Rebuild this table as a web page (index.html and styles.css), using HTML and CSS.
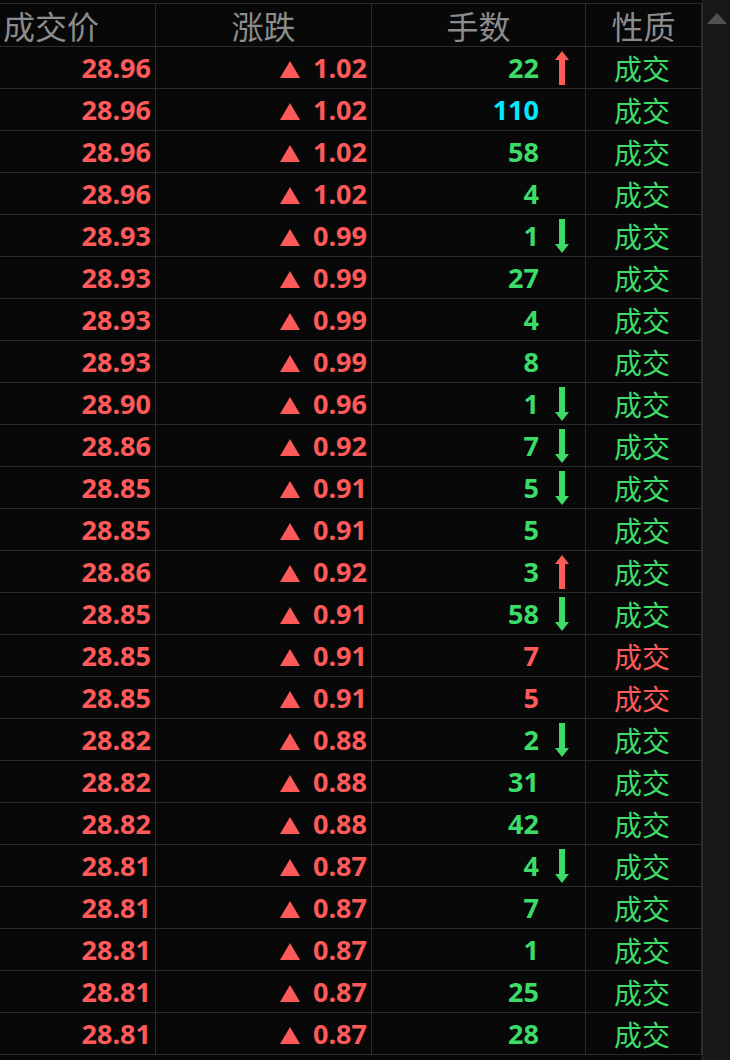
FILE: index.html
```html
<!DOCTYPE html>
<html lang="zh-CN">
<head>
    <meta charset="UTF-8">
    <meta name="viewport" content="width=device-width, initial-scale=1.0">
    <title>成交明细</title>
    <link rel="stylesheet" href="styles.css">
</head>
<body>
    <svg class="defs" width="0" height="0">
        <symbol id="tri" viewBox="0 0 20 17"><path d="M10 0 L20 17 L0 17 Z"/></symbol>
        <symbol id="up" viewBox="0 0 14 34"><path d="M7 0 L14 9 L10 9 L10 34 L4 34 L4 9 L0 9 Z"/></symbol>
        <symbol id="down" viewBox="0 0 14 34"><path d="M4 0 L10 0 L10 25 L14 25 L7 34 L0 25 L4 25 Z"/></symbol>
    </svg>

    <div class="wrap">
        <div class="ticks">
            <div class="row head">
                <div class="cell price">成交价</div>
                <div class="cell">涨跌</div>
                <div class="cell">手数</div>
                <div class="cell">性质</div>
            </div>

            <div class="row"><div class="cell price">28.96</div><div class="cell chg"><svg class="tri"><use href="#tri" width="20" height="17"/></svg>1.02</div><div class="cell vol"><span class="num">22</span><span class="dir"><svg class="arrow red"><use href="#up" width="14" height="34"/></svg></span></div><div class="cell kind">成交</div></div>
            <div class="row"><div class="cell price">28.96</div><div class="cell chg"><svg class="tri"><use href="#tri" width="20" height="17"/></svg>1.02</div><div class="cell vol"><span class="num big">110</span><span class="dir"></span></div><div class="cell kind">成交</div></div>
            <div class="row"><div class="cell price">28.96</div><div class="cell chg"><svg class="tri"><use href="#tri" width="20" height="17"/></svg>1.02</div><div class="cell vol"><span class="num">58</span><span class="dir"></span></div><div class="cell kind">成交</div></div>
            <div class="row"><div class="cell price">28.96</div><div class="cell chg"><svg class="tri"><use href="#tri" width="20" height="17"/></svg>1.02</div><div class="cell vol"><span class="num">4</span><span class="dir"></span></div><div class="cell kind">成交</div></div>
            <div class="row"><div class="cell price">28.93</div><div class="cell chg"><svg class="tri"><use href="#tri" width="20" height="17"/></svg>0.99</div><div class="cell vol"><span class="num">1</span><span class="dir"><svg class="arrow green"><use href="#down" width="14" height="34"/></svg></span></div><div class="cell kind">成交</div></div>
            <div class="row"><div class="cell price">28.93</div><div class="cell chg"><svg class="tri"><use href="#tri" width="20" height="17"/></svg>0.99</div><div class="cell vol"><span class="num">27</span><span class="dir"></span></div><div class="cell kind">成交</div></div>
            <div class="row"><div class="cell price">28.93</div><div class="cell chg"><svg class="tri"><use href="#tri" width="20" height="17"/></svg>0.99</div><div class="cell vol"><span class="num">4</span><span class="dir"></span></div><div class="cell kind">成交</div></div>
            <div class="row"><div class="cell price">28.93</div><div class="cell chg"><svg class="tri"><use href="#tri" width="20" height="17"/></svg>0.99</div><div class="cell vol"><span class="num">8</span><span class="dir"></span></div><div class="cell kind">成交</div></div>
            <div class="row"><div class="cell price">28.90</div><div class="cell chg"><svg class="tri"><use href="#tri" width="20" height="17"/></svg>0.96</div><div class="cell vol"><span class="num">1</span><span class="dir"><svg class="arrow green"><use href="#down" width="14" height="34"/></svg></span></div><div class="cell kind">成交</div></div>
            <div class="row"><div class="cell price">28.86</div><div class="cell chg"><svg class="tri"><use href="#tri" width="20" height="17"/></svg>0.92</div><div class="cell vol"><span class="num">7</span><span class="dir"><svg class="arrow green"><use href="#down" width="14" height="34"/></svg></span></div><div class="cell kind">成交</div></div>
            <div class="row"><div class="cell price">28.85</div><div class="cell chg"><svg class="tri"><use href="#tri" width="20" height="17"/></svg>0.91</div><div class="cell vol"><span class="num">5</span><span class="dir"><svg class="arrow green"><use href="#down" width="14" height="34"/></svg></span></div><div class="cell kind">成交</div></div>
            <div class="row"><div class="cell price">28.85</div><div class="cell chg"><svg class="tri"><use href="#tri" width="20" height="17"/></svg>0.91</div><div class="cell vol"><span class="num">5</span><span class="dir"></span></div><div class="cell kind">成交</div></div>
            <div class="row"><div class="cell price">28.86</div><div class="cell chg"><svg class="tri"><use href="#tri" width="20" height="17"/></svg>0.92</div><div class="cell vol"><span class="num">3</span><span class="dir"><svg class="arrow red"><use href="#up" width="14" height="34"/></svg></span></div><div class="cell kind">成交</div></div>
            <div class="row"><div class="cell price">28.85</div><div class="cell chg"><svg class="tri"><use href="#tri" width="20" height="17"/></svg>0.91</div><div class="cell vol"><span class="num">58</span><span class="dir"><svg class="arrow green"><use href="#down" width="14" height="34"/></svg></span></div><div class="cell kind">成交</div></div>
            <div class="row"><div class="cell price">28.85</div><div class="cell chg"><svg class="tri"><use href="#tri" width="20" height="17"/></svg>0.91</div><div class="cell vol"><span class="num buy">7</span><span class="dir"></span></div><div class="cell kind buy">成交</div></div>
            <div class="row"><div class="cell price">28.85</div><div class="cell chg"><svg class="tri"><use href="#tri" width="20" height="17"/></svg>0.91</div><div class="cell vol"><span class="num buy">5</span><span class="dir"></span></div><div class="cell kind buy">成交</div></div>
            <div class="row"><div class="cell price">28.82</div><div class="cell chg"><svg class="tri"><use href="#tri" width="20" height="17"/></svg>0.88</div><div class="cell vol"><span class="num">2</span><span class="dir"><svg class="arrow green"><use href="#down" width="14" height="34"/></svg></span></div><div class="cell kind">成交</div></div>
            <div class="row"><div class="cell price">28.82</div><div class="cell chg"><svg class="tri"><use href="#tri" width="20" height="17"/></svg>0.88</div><div class="cell vol"><span class="num">31</span><span class="dir"></span></div><div class="cell kind">成交</div></div>
            <div class="row"><div class="cell price">28.82</div><div class="cell chg"><svg class="tri"><use href="#tri" width="20" height="17"/></svg>0.88</div><div class="cell vol"><span class="num">42</span><span class="dir"></span></div><div class="cell kind">成交</div></div>
            <div class="row"><div class="cell price">28.81</div><div class="cell chg"><svg class="tri"><use href="#tri" width="20" height="17"/></svg>0.87</div><div class="cell vol"><span class="num">4</span><span class="dir"><svg class="arrow green"><use href="#down" width="14" height="34"/></svg></span></div><div class="cell kind">成交</div></div>
            <div class="row"><div class="cell price">28.81</div><div class="cell chg"><svg class="tri"><use href="#tri" width="20" height="17"/></svg>0.87</div><div class="cell vol"><span class="num">7</span><span class="dir"></span></div><div class="cell kind">成交</div></div>
            <div class="row"><div class="cell price">28.81</div><div class="cell chg"><svg class="tri"><use href="#tri" width="20" height="17"/></svg>0.87</div><div class="cell vol"><span class="num">1</span><span class="dir"></span></div><div class="cell kind">成交</div></div>
            <div class="row"><div class="cell price">28.81</div><div class="cell chg"><svg class="tri"><use href="#tri" width="20" height="17"/></svg>0.87</div><div class="cell vol"><span class="num">25</span><span class="dir"></span></div><div class="cell kind">成交</div></div>
            <div class="row"><div class="cell price">28.81</div><div class="cell chg"><svg class="tri"><use href="#tri" width="20" height="17"/></svg>0.87</div><div class="cell vol"><span class="num">28</span><span class="dir"></span></div><div class="cell kind">成交</div></div>
        </div>

        <div class="scrollbar">
            <svg class="scroll-up" viewBox="0 0 20 11"><path d="M10 0 L20 11 L0 11 Z"/></svg>
        </div>
    </div>
</body>
</html>
```

FILE: styles.css
```css
body {
    margin: 0;
    background-color: #080808;
    font-family: "Open Sans", "Noto Sans CJK SC", sans-serif;
    height: 1060px;
    overflow: hidden;
}
.defs {
    position: absolute;
}
.wrap {
    display: flex;
    height: 1060px;
}
.ticks {
    width: 702px;
    padding-top: 3px;
    box-sizing: border-box;
}
.row {
    display: grid;
    grid-template-columns: 156px 216px 214px 116px;
    height: 42px;
    border-bottom: 1px solid #2b2b2b;
    box-sizing: border-box;
}
.row .cell {
    border-right: 1px solid #2b2b2b;
    display: flex;
    align-items: center;
    justify-content: flex-end;
    padding-right: 4px;
    font-size: 27px;
    line-height: 1;
    font-weight: 700;
    color: #ff5a5a;
    white-space: nowrap;
}
.head {
    height: 44px;
    border-top: 1px solid #2b2b2b;
}
.head .cell {
    justify-content: center;
    padding: 0;
    font-family: "Noto Sans CJK SC", sans-serif;
    font-weight: 400;
    font-size: 32px;
    color: #8c8c8c;
}
.head .price {
    justify-content: flex-start;
    padding-left: 3px;
}
.tri {
    flex-shrink: 0;
    width: 20px;
    height: 17px;
    fill: #ff5a5a;
    margin: 4px 13px 0 0;
}
.vol {
    padding-right: 0 !important;
}
.num {
    color: #3ddc68;
}
.num.big {
    color: #00eaff;
}
.num.buy {
    color: #ff5a5a;
}
.dir {
    flex-shrink: 0;
    width: 46px;
    display: flex;
    justify-content: center;
    align-items: center;
}
.arrow {
    flex-shrink: 0;
    width: 14px;
    height: 34px;
}
.arrow.red {
    fill: #ff5a5a;
}
.arrow.green {
    fill: #3ddc68;
}
.row .kind {
    justify-content: center;
    padding: 0 3px 0 0;
    font-family: "Noto Sans CJK SC", sans-serif;
    font-weight: 400;
    font-size: 28px;
    color: #3ddc68;
}
.row .kind.buy {
    color: #ff5a5a;
}
.scrollbar {
    flex: 1;
    background-color: #171717;
    border-left: 1px solid #2e2e2e;
    display: flex;
    justify-content: center;
    padding-top: 13px;
    align-items: flex-start;
}
.scroll-up {
    width: 20px;
    height: 11px;
    fill: #505050;
}
```
